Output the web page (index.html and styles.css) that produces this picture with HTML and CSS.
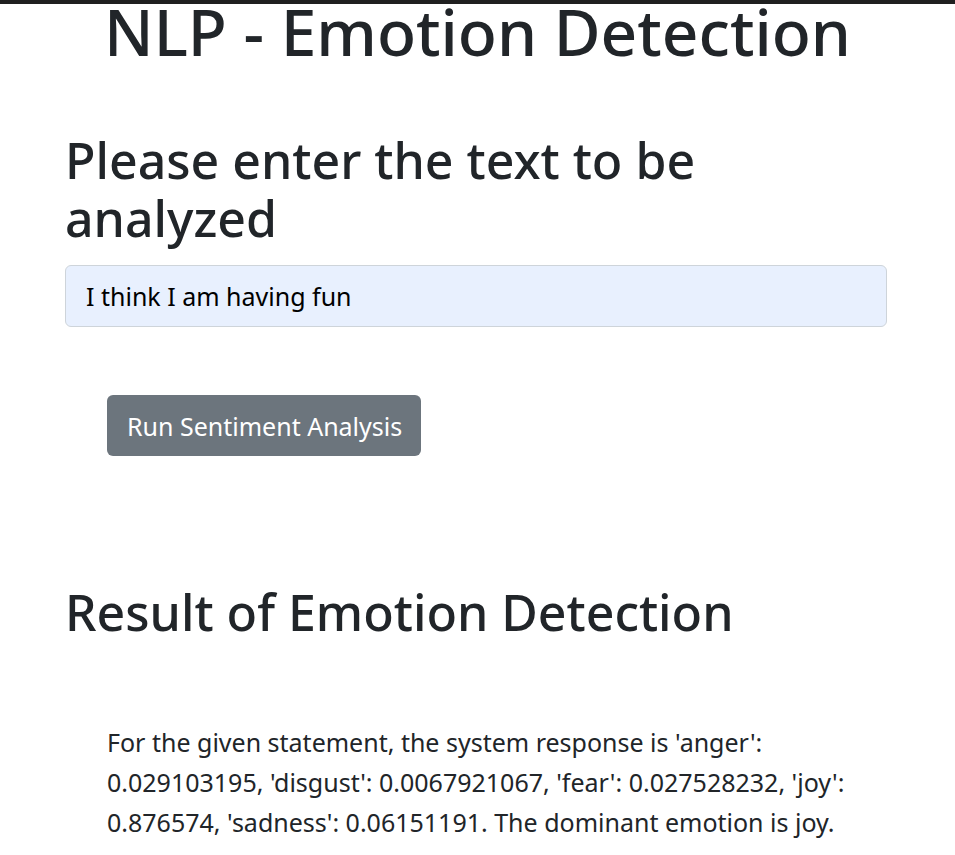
FILE: index.html
```html
<!DOCTYPE html>
<html lang="en">
<head>
<meta charset="utf-8">
<title>NLP - Emotion Detection</title>
<link rel="stylesheet" href="styles.css">
</head>
<body>
<div class="topbar"></div>
<h1 class="title">NLP - Emotion Detection</h1>
<main class="container">
  <h2 class="heading">Please enter the text to be analyzed</h2>
  <input class="text-input" type="text" value="I think I am having fun">
  <div class="actions">
    <button class="btn" type="button">Run Sentiment Analysis</button>
  </div>
  <h2 class="heading result-title">Result of Emotion Detection</h2>
  <div class="result">
    <p class="result-text">For the given statement, the system response is 'anger': 0.029103195, 'disgust': 0.0067921067, 'fear': 0.027528232, 'joy': 0.876574, 'sadness': 0.06151191. The dominant emotion is joy.</p>
  </div>
</main>
</body>
</html>
```
FILE: styles.css
```css
html, body {
  margin: 0;
  padding: 0;
  background: #ffffff;
}
body {
  font-family: "Noto Sans", "Open Sans", sans-serif;
  color: #212529;
}
.topbar {
  height: 4px;
  background: #202020;
}
.title {
  margin: 0;
  text-align: center;
  font-size: 64px;
  line-height: 56px;
  font-weight: 500;
}
.container {
  width: 822px;
  margin: 0 0 0 65px;
}
.heading {
  margin: 71px 0 18px;
  font-size: 50px;
  line-height: 58px;
  font-weight: 500;
}
.text-input {
  display: block;
  box-sizing: border-box;
  width: 822px;
  height: 62px;
  margin: 0;
  padding: 0 20px;
  border: 1px solid #ced4da;
  border-radius: 6px;
  background: #e8f0fe;
  color: #000000;
  font-family: inherit;
  font-size: 25px;
  outline: none;
}
.actions {
  padding: 68px 0 0 42px;
}
.btn {
  box-sizing: border-box;
  height: 61px;
  padding: 0 19px 0 20px;
  border: 0;
  border-radius: 6px;
  background: #6c757d;
  color: #ffffff;
  font-family: inherit;
  font-size: 25px;
}
.result-title {
  margin-top: 127px;
  margin-bottom: 0;
}
.result {
  padding: 81px 0 0 42px;
}
.result-text {
  margin: 0;
  font-size: 25px;
  line-height: 40px;
}
```
